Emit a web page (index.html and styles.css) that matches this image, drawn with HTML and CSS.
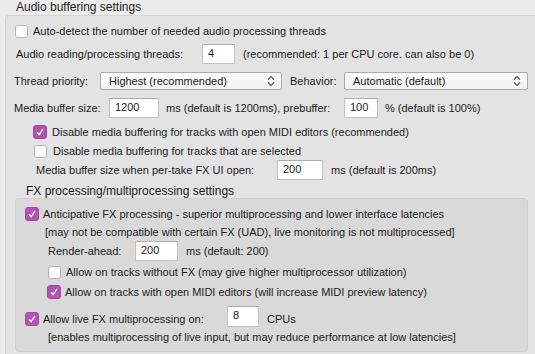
FILE: index.html
```html
<!DOCTYPE html>
<html lang="en">
<head>
    <meta charset="UTF-8">
    <title>Audio buffering settings</title>
    <link rel="stylesheet" href="styles.css">
</head>
<body>
    <div class="legend">Audio buffering settings</div>
    <div class="group">
        <div class="row r1">
            <span class="cb"></span>
            <span class="txt">Auto-detect the number of needed audio processing threads</span>
        </div>
        <div class="row r2">
            <span class="lbl w-threads">Audio reading/processing threads:</span>
            <span class="field w33">4</span>
            <span class="after">(recommended: 1 per CPU core. can also be 0)</span>
        </div>
        <div class="row r3">
            <span class="lbl w-prio">Thread priority:</span>
            <span class="select w182">Highest (recommended)<svg class="chev" width="8" height="12" viewBox="0 0 8 12"><path d="M1 4.5L4 1.5L7 4.5M1 7.5L4 10.5L7 7.5" fill="none" stroke="#555" stroke-width="1.1"/></svg></span>
            <span class="lbl w-behav">Behavior:</span>
            <span class="select w184">Automatic (default)<svg class="chev" width="8" height="12" viewBox="0 0 8 12"><path d="M1 4.5L4 1.5L7 4.5M1 7.5L4 10.5L7 7.5" fill="none" stroke="#555" stroke-width="1.1"/></svg></span>
        </div>
        <div class="row r4">
            <span class="lbl w-media">Media buffer size:</span>
            <span class="field w50">1200</span>
            <span class="after w-pre">ms (default is 1200ms), prebuffer:</span>
            <span class="field w34">100</span>
            <span class="after">% (default is 100%)</span>
        </div>
        <div class="row r5">
            <span class="cb on"><svg width="14" height="14" viewBox="0 0 14 14"><path d="M3.5 7.2L6 10L10.5 3.5" fill="none" stroke="#fff" stroke-width="1.6"/></svg></span>
            <span class="txt">Disable media buffering for tracks with open MIDI editors (recommended)</span>
        </div>
        <div class="row r6">
            <span class="cb"></span>
            <span class="txt">Disable media buffering for tracks that are selected</span>
        </div>
        <div class="row r7">
            <span class="lbl w-take">Media buffer size when per-take FX UI open:</span>
            <span class="field w46">200</span>
            <span class="after">ms (default is 200ms)</span>
        </div>
        <div class="row r8">
            <span class="subtitle">FX processing/multiprocessing settings</span>
        </div>

        <div class="inner">
            <div class="row r9">
                <span class="cb on"><svg width="14" height="14" viewBox="0 0 14 14"><path d="M3.5 7.2L6 10L10.5 3.5" fill="none" stroke="#fff" stroke-width="1.6"/></svg></span>
                <span class="txt">Anticipative FX processing - superior multiprocessing and lower interface latencies</span>
            </div>
            <div class="row r10">
                <span class="txt">[may not be compatible with certain FX (UAD), live monitoring is not multiprocessed]</span>
            </div>
            <div class="row r11">
                <span class="lbl w-render">Render-ahead:</span>
                <span class="field w43">200</span>
                <span class="after">ms (default: 200)</span>
            </div>
            <div class="row r12">
                <span class="cb"></span>
                <span class="txt">Allow on tracks without FX (may give higher multiprocessor utilization)</span>
            </div>
            <div class="row r13">
                <span class="cb on"><svg width="14" height="14" viewBox="0 0 14 14"><path d="M3.5 7.2L6 10L10.5 3.5" fill="none" stroke="#fff" stroke-width="1.6"/></svg></span>
                <span class="txt">Allow on tracks with open MIDI editors (will increase MIDI preview latency)</span>
            </div>
            <div class="row r14">
                <span class="cb on"><svg width="14" height="14" viewBox="0 0 14 14"><path d="M3.5 7.2L6 10L10.5 3.5" fill="none" stroke="#fff" stroke-width="1.6"/></svg></span>
                <span class="txt w-live">Allow live FX multiprocessing on:</span>
                <span class="field w32 high">8</span>
                <span class="after">CPUs</span>
            </div>
            <div class="row r15">
                <span class="txt">[enables multiprocessing of live input, but may reduce performance at low latencies]</span>
            </div>
        </div>
    </div>
</body>
</html>
```

FILE: styles.css
```css
*{
    margin: 0;
    padding: 0;
    box-sizing: border-box;
}
html,body{
    overflow: hidden;
}
body{
    background: #ececec;
    color: #1c1c1c;
    font-family: "Liberation Sans", Arial, sans-serif;
    font-size: 11px;
    width: 535px;
    height: 354px;
}
.legend{
    font-size: 12px;
    height: 15px;
    line-height: 15px;
    padding-left: 16px;
}
/* outer group runs off the right and bottom edges */
.group{
    margin-left: 5px;
    width: 530px;
    height: 339px;
    background: #e3e3e3;
    border: 1px solid #d4d4d4;
    border-right: none;
    border-bottom: none;
    border-radius: 4px 0 0 0;
}
.row{
    display: flex;
    align-items: center;
    white-space: nowrap;
}
.txt,.lbl,.after,.subtitle{
    display: block;
    flex: none;
}
.subtitle{
    font-size: 12px;
}

/* checkboxes */
.cb{
    flex: none;
    width: 13px;
    height: 13px;
    background: #fff;
    border: 1px solid #b4b4b4;
    border-radius: 3px;
    display: flex;
    align-items: center;
    justify-content: center;
}
.cb.on{
    width: 14px;
    height: 14px;
    background: #b252b5;
    border-color: #a346a6;
}

/* text fields */
.field{
    flex: none;
    display: block;
    height: 20px;
    line-height: 17px;
    padding-left: 5px;
    background: #fff;
    border: 1px solid #c2c2c2;
    border-top-color: #adadad;
}
.field.high{
    height: 21px;
    line-height: 16px;
    align-self: flex-start;
    margin-top: -6px;
}

/* popup menus */
.select{
    flex: none;
    position: relative;
    display: block;
    height: 18px;
    line-height: 16px;
    padding-left: 8px;
    background: linear-gradient(#fdfdfd, #f1f1f1);
    border: 1px solid #ababab;
    border-radius: 2px;
}
.chev{
    position: absolute;
    right: 6px;
    top: 2px;
}

/* vertical rhythm */
.r1{ margin-top: 8px; height: 14px; padding-left: 9px; }
.r1 .txt{ margin-left: 5px; }
.r2{ margin-top: 6px; height: 20px; padding-left: 10px; }
.r3{ margin-top: 8px; height: 18px; padding-left: 8px; }
.r4{ margin-top: 8px; height: 20px; padding-left: 8px; }
.r5{ margin-top: 7px; height: 14px; padding-left: 27px; }
.r6{ margin-top: 5px; height: 14px; padding-left: 28px; }
.r5 .txt{ margin-left: 5px; }
.r6 .txt{ margin-left: 6px; }
.r7{ margin-top: 2px; height: 20px; padding-left: 30px; }
.r8{ margin-top: 4px; height: 14px; padding-left: 20px; }

.inner{
    margin-left: 9px;
    width: 513px;
    height: 154px;
    background: #d9d9d9;
    border: 1px solid #d0d0d0;
    border-radius: 4px;
}
.r9{ margin-top: 8px; height: 14px; padding-left: 9px; }
.r9 .txt{ margin-left: 4px; }
.r10{ margin-top: 4px; height: 14px; padding-left: 29px; }
.r11{ margin-top: 2px; height: 20px; padding-left: 32px; }
.r12{ margin-top: 4px; height: 14px; padding-left: 32px; }
.r13{ margin-top: 6px; height: 14px; padding-left: 31px; }
.r12 .txt{ margin-left: 5px; }
.r13 .txt{ margin-left: 4px; }
.r14{ margin-top: 13px; height: 14px; padding-left: 9px; }
.r14 .txt{ margin-left: 4px; }
.r15{ margin-top: 4px; height: 14px; padding-left: 32px; }

/* column widths */
.w-threads{ width: 186px; }
.w-prio{ width: 86px; }
.w-behav{ width: 54px; margin-left: 8px; }
.w-media{ width: 95px; }
.w-pre{ width: 178px; }
.w-take{ width: 241px; }
.w-render{ width: 87px; }
.w-live{ width: 184px; }
.after{ margin-left: 8px; }
.w-pre{ margin-left: 7px; }
.r4 .after:last-child{ margin-left: 7px; }

.w33{ width: 33px; }
.w50{ width: 50px; }
.w34{ width: 34px; }
.w46{ width: 46px; }
.w43{ width: 43px; }
.w32{ width: 32px; }
.w182{ width: 182px; }
.w184{ width: 184px; }
```
